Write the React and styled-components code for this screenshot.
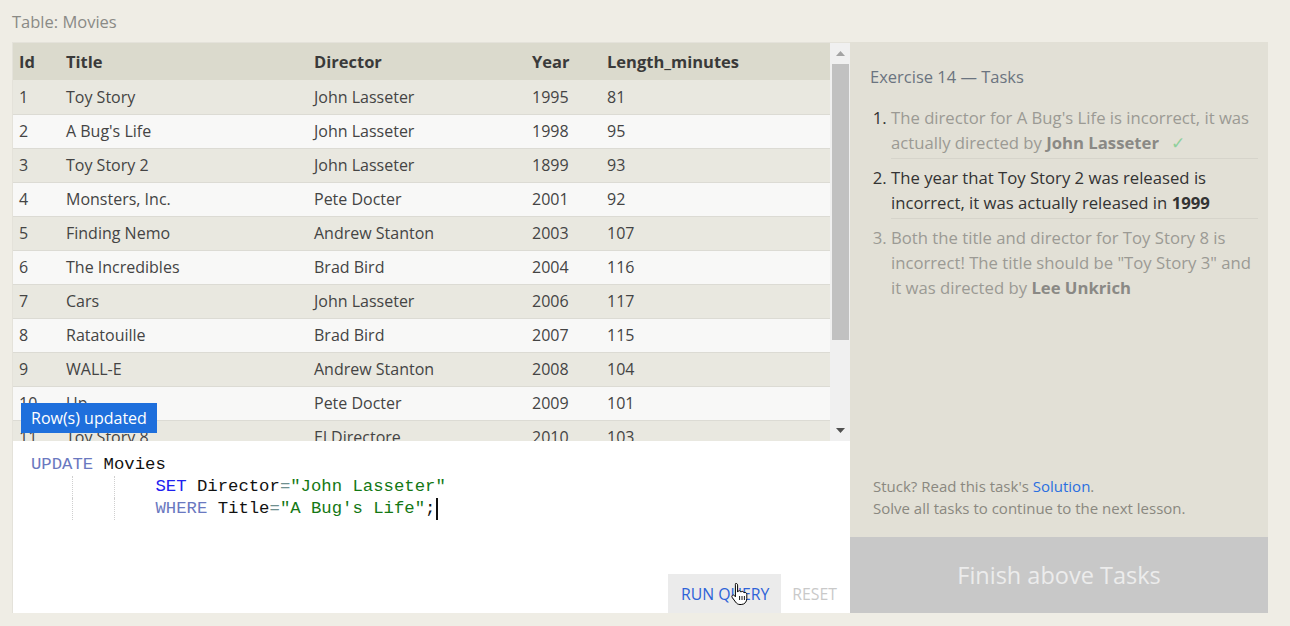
import React from "react";
import styled, { createGlobalStyle } from "styled-components";

const Global = createGlobalStyle`
  html, body { margin: 0; padding: 0; background: #efede5; }
  body { font-family: "Open Sans", "Noto Sans", sans-serif; }
  * { box-sizing: border-box; }
`;

const Page = styled.div`
  width: 1290px;
  height: 626px;
  padding: 0 22px 13px 12px;
  display: flex;
  flex-direction: column;
`;

const Caption = styled.div`
  height: 42px;
  display: flex;
  align-items: center;
  font-size: 16.5px;
  color: #8a8a85;
`;

const Workspace = styled.div`
  flex: 1;
  display: flex;
`;

const LeftPanel = styled.div`
  width: 838px;
  display: flex;
  flex-direction: column;
  border: 1px solid #e4e2da;
  border-bottom: none;
  border-right: none;
`;

const TableArea = styled.div`
  height: 398px;
  display: flex;
  position: relative;
  background: #e9e8e0;
`;

const TableWrap = styled.div`
  flex: 1;
  overflow: hidden;
`;

const Table = styled.table`
  width: 100%;
  border-collapse: collapse;
  table-layout: fixed;
  font-size: 16px;
  color: #444;
`;

const Th = styled.th`
  height: 37px;
  text-align: left;
  font-weight: 700;
  font-size: 16.5px;
  color: #3a3a3a;
  background: #dbdacd;
  padding: 0 0 0 6px;
  width: ${(p) => p.$w || "auto"};
`;

const Tr = styled.tr`
  background: ${(p) => (p.$odd ? "#e9e8e0" : "#f8f8f7")};
  border-bottom: 1px solid #dcdbd4;
`;

const Td = styled.td`
  height: 34px;
  padding: 0 0 0 6px;
  white-space: nowrap;
`;

const Scrollbar = styled.div`
  width: 20px;
  background: #f0f0f0;
  display: flex;
  flex-direction: column;
  align-items: center;
`;

const Arrow = styled.div`
  height: 21px;
  display: flex;
  align-items: center;
  justify-content: center;
  width: 100%;
`;

const Thumb = styled.div`
  width: 17px;
  height: 276px;
  background: #c1c1c1;
`;

const Track = styled.div`
  flex: 1;
`;

const Badge = styled.div`
  position: absolute;
  left: 8px;
  top: 360px;
  height: 30px;
  padding: 0 10px;
  display: flex;
  align-items: center;
  background: #1e6fdc;
  color: #fff;
  font-size: 16px;
`;

const Editor = styled.div`
  flex: 1;
  background: #fff;
  display: flex;
  flex-direction: column;
  justify-content: space-between;
`;

const Code = styled.pre`
  margin: 0;
  padding: 13px 0 0 18px;
  font-family: "Liberation Mono", "DejaVu Sans Mono", monospace;
  font-size: 17.3px;
  line-height: 22px;
  color: #111;
`;

const Line = styled.div`
  display: flex;
  height: 22px;
  white-space: pre;
`;

const Indent = styled.span`
  display: inline-block;
  width: 4ch;
  border-left: ${(p) => (p.$guide ? "1px dotted #cfcfcf" : "none")};
`;

const Kw = styled.span`
  color: ${(p) => (p.$strong ? "#2020f0" : "#6a78c0")};
`;

const Op = styled.span`
  color: #6f8f8f;
`;

const Str = styled.span`
  color: #147814;
`;

const Caret = styled.span`
  display: inline-block;
  width: 2px;
  height: 22px;
  background: #111;
  margin-left: 1px;
`;

const ButtonRow = styled.div`
  display: flex;
  justify-content: flex-end;
`;

const EditorButton = styled.button`
  height: 39px;
  border: none;
  padding: ${(p) => (p.$primary ? "0 12px 0 13px" : "0 13px 0 11px")};
  font-family: "Open Sans", sans-serif;
  font-size: 15.8px;
  background: ${(p) => (p.$primary ? "#ebebeb" : "transparent")};
  color: ${(p) => (p.$primary ? "#2e63d8" : "#c9c9c9")};
  position: relative;
`;

const Pointer = styled.svg`
  position: absolute;
  left: 62px;
  top: 8px;
`;

const RightPanel = styled.div`
  width: 418px;
  background: #e2e0d6;
  display: flex;
  flex-direction: column;
`;

const Tasks = styled.div`
  flex: 1;
  padding: 23px 10px 0 20px;
`;

const TasksTitle = styled.div`
  font-size: 16.5px;
  line-height: 24px;
  color: #6b7480;
`;

const TaskList = styled.ol`
  margin: 10px 0 0;
  padding-left: 21px;
`;

const Task = styled.li`
  font-size: 16.7px;
  line-height: 25px;
  padding: 6px 0 3px;
  color: ${(p) => (p.$active ? "#333" : "#9b9a94")};
  border-bottom: ${(p) => (p.$last ? "none" : "1px solid #d6d4cb")};
  &::marker {
    color: ${(p) => (p.$done || p.$active ? "#333" : "#9b9a94")};
  }
  b {
    color: ${(p) => (p.$active ? "#333" : "#8a8985")};
  }
`;

const Check = styled.span`
  color: #8fd09c;
  margin-left: 12px;
`;

const Help = styled.div`
  padding: 0 20px 18px 23px;
  font-size: 15px;
  line-height: 22px;
  color: #8a8880;
`;

const Link = styled.a`
  color: #2a6fe0;
  text-decoration: none;
`;

const Finish = styled.div`
  height: 76px;
  background: #c8c8c8;
  color: #ececec;
  font-size: 23.5px;
  display: flex;
  align-items: center;
  justify-content: center;
`;

const rows = [
  [1, "Toy Story", "John Lasseter", 1995, 81],
  [2, "A Bug's Life", "John Lasseter", 1998, 95],
  [3, "Toy Story 2", "John Lasseter", 1899, 93],
  [4, "Monsters, Inc.", "Pete Docter", 2001, 92],
  [5, "Finding Nemo", "Andrew Stanton", 2003, 107],
  [6, "The Incredibles", "Brad Bird", 2004, 116],
  [7, "Cars", "John Lasseter", 2006, 117],
  [8, "Ratatouille", "Brad Bird", 2007, 115],
  [9, "WALL-E", "Andrew Stanton", 2008, 104],
  [10, "Up", "Pete Docter", 2009, 101],
  [11, "Toy Story 8", "El Directore", 2010, 103],
  [12, "Cars 2", "John Lasseter", 2011, 120],
  [13, "Brave", "Brenda Chapman", 2012, 102],
];

export default function App() {
  return (
    <>
      <Global />
      <Page>
        <Caption>Table: Movies</Caption>
        <Workspace>
          <LeftPanel>
            <TableArea>
              <TableWrap>
                <Table>
                  <thead>
                    <tr>
                      <Th $w="47px">Id</Th>
                      <Th $w="248px">Title</Th>
                      <Th $w="218px">Director</Th>
                      <Th $w="75px">Year</Th>
                      <Th>Length_minutes</Th>
                    </tr>
                  </thead>
                  <tbody>
                    {rows.map((r, i) => (
                      <Tr key={r[0]} $odd={i % 2 === 0}>
                        {r.map((c, j) => (
                          <Td key={j}>{c}</Td>
                        ))}
                      </Tr>
                    ))}
                  </tbody>
                </Table>
              </TableWrap>
              <Scrollbar>
                <Arrow>
                  <svg width="9" height="5" viewBox="0 0 9 5">
                    <path d="M0 5 L4.5 0 L9 5 Z" fill="#a3a3a3" />
                  </svg>
                </Arrow>
                <Thumb />
                <Track />
                <Arrow>
                  <svg width="9" height="5" viewBox="0 0 9 5">
                    <path d="M0 0 L9 0 L4.5 5 Z" fill="#505050" />
                  </svg>
                </Arrow>
              </Scrollbar>
              <Badge>Row(s) updated</Badge>
            </TableArea>
            <Editor>
              <Code>
                <Line>
                  <Kw>UPDATE</Kw> Movies
                </Line>
                <Line>
                  <Indent />
                  <Indent $guide />
                  <Indent $guide />
                  <Kw $strong>SET</Kw> Director<Op>=</Op>
                  <Str>"John Lasseter"</Str>
                </Line>
                <Line>
                  <Indent />
                  <Indent $guide />
                  <Indent $guide />
                  <Kw>WHERE</Kw> Title<Op>=</Op>
                  <Str>"A Bug's Life"</Str>;<Caret />
                </Line>
              </Code>
              <ButtonRow>
                <EditorButton $primary>
                  RUN QUERY
                  <Pointer width="20" height="24" viewBox="0 0 20 24">
                    <path
                      d="M6 1.5c1 0 1.6.7 1.6 1.6V10l.2-.1c.3-.9 1.1-1.3 1.9-1.1.7.2 1.1.7 1.2 1.3.4-.6 1.2-.9 1.9-.7.7.2 1.1.8 1.2 1.4.5-.4 1.2-.5 1.8-.2.7.3 1 1 1 1.7v4.3c0 3.2-2.2 5.9-5.6 5.9H10c-2 0-3.3-.9-4.4-2.4L2.3 15.6c-.6-.8-.5-1.8.2-2.3.7-.5 1.6-.3 2.1.4l.8 1.1V3.1C5.4 2.2 5.1 1.5 6 1.5z"
                      fill="#fff"
                      stroke="#000"
                      strokeWidth="1"
                    />
                    <path d="M9.6 14v4M12 14v4M14.4 14v4" stroke="#000" strokeWidth="0.9" />
                  </Pointer>
                </EditorButton>
                <EditorButton>RESET</EditorButton>
              </ButtonRow>
            </Editor>
          </LeftPanel>
          <RightPanel>
            <Tasks>
              <TasksTitle>Exercise 14 — Tasks</TasksTitle>
              <TaskList>
                <Task $done>
                  The director for A Bug's Life is incorrect, it was actually directed by{" "}
                  <b>John Lasseter</b>
                  <Check>✓</Check>
                </Task>
                <Task $active>
                  The year that Toy Story 2 was released is incorrect, it was actually released in{" "}
                  <b>1999</b>
                </Task>
                <Task $last>
                  Both the title and director for Toy Story 8 is incorrect! The title should be "Toy
                  Story 3" and it was directed by <b>Lee Unkrich</b>
                </Task>
              </TaskList>
            </Tasks>
            <Help>
              Stuck? Read this task's <Link href="#">Solution</Link>.
              <br />
              Solve all tasks to continue to the next lesson.
            </Help>
            <Finish>Finish above Tasks</Finish>
          </RightPanel>
        </Workspace>
      </Page>
    </>
  );
}
